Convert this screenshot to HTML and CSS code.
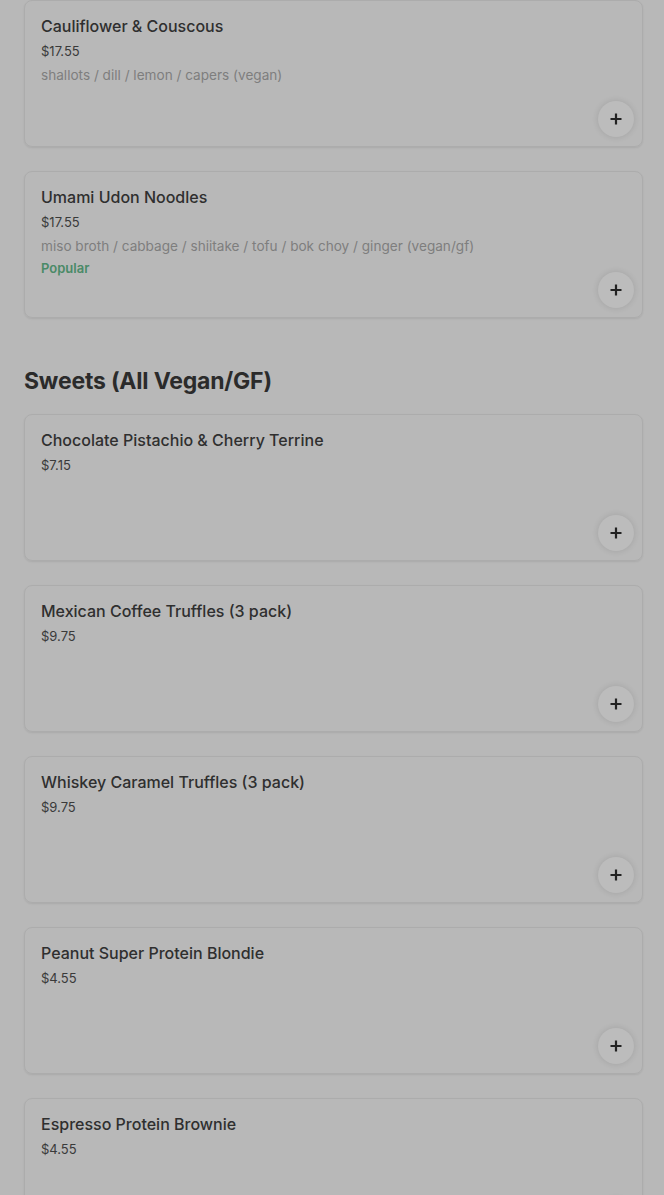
FILE: index.html
```html
<!DOCTYPE html>
<html lang="en">
<head>
<meta charset="utf-8">
<title>Menu</title>
<link rel="stylesheet" href="styles.css">
</head>
<body>
<main class="menu">
  <section class="section">
    <div class="items">
      <article class="card">
        <h3 class="name">Cauliflower &amp; Couscous</h3>
        <div class="price">$17.55</div>
        <p class="desc">shallots / dill / lemon / capers (vegan)</p>
        <button class="add" aria-label="Add"><svg viewBox="0 0 14 14" width="14" height="14"><path d="M7 1.5v11M1.5 7h11" stroke="#222" stroke-width="2.2" fill="none"/></svg></button>
      </article>
      <article class="card">
        <h3 class="name">Umami Udon Noodles</h3>
        <div class="price">$17.55</div>
        <p class="desc">miso broth / cabbage / shiitake / tofu / bok choy / ginger (vegan/gf)</p>
        <div class="tag">Popular</div>
        <button class="add" aria-label="Add"><svg viewBox="0 0 14 14" width="14" height="14"><path d="M7 1.5v11M1.5 7h11" stroke="#222" stroke-width="2.2" fill="none"/></svg></button>
      </article>
    </div>
  </section>
  <section class="section">
    <h2 class="heading">Sweets (All Vegan/GF)</h2>
    <div class="items">
      <article class="card">
        <h3 class="name">Chocolate Pistachio &amp; Cherry Terrine</h3>
        <div class="price">$7.15</div>
        <button class="add" aria-label="Add"><svg viewBox="0 0 14 14" width="14" height="14"><path d="M7 1.5v11M1.5 7h11" stroke="#222" stroke-width="2.2" fill="none"/></svg></button>
      </article>
      <article class="card">
        <h3 class="name">Mexican Coffee Truffles (3 pack)</h3>
        <div class="price">$9.75</div>
        <button class="add" aria-label="Add"><svg viewBox="0 0 14 14" width="14" height="14"><path d="M7 1.5v11M1.5 7h11" stroke="#222" stroke-width="2.2" fill="none"/></svg></button>
      </article>
      <article class="card">
        <h3 class="name">Whiskey Caramel Truffles (3 pack)</h3>
        <div class="price">$9.75</div>
        <button class="add" aria-label="Add"><svg viewBox="0 0 14 14" width="14" height="14"><path d="M7 1.5v11M1.5 7h11" stroke="#222" stroke-width="2.2" fill="none"/></svg></button>
      </article>
      <article class="card">
        <h3 class="name">Peanut Super Protein Blondie</h3>
        <div class="price">$4.55</div>
        <button class="add" aria-label="Add"><svg viewBox="0 0 14 14" width="14" height="14"><path d="M7 1.5v11M1.5 7h11" stroke="#222" stroke-width="2.2" fill="none"/></svg></button>
      </article>
      <article class="card">
        <h3 class="name">Espresso Protein Brownie</h3>
        <div class="price">$4.55</div>
        <button class="add" aria-label="Add"><svg viewBox="0 0 14 14" width="14" height="14"><path d="M7 1.5v11M1.5 7h11" stroke="#222" stroke-width="2.2" fill="none"/></svg></button>
      </article>
    </div>
  </section>
</main>
</body>
</html>
```
FILE: styles.css
```css
* { box-sizing: border-box; }
html, body {
  margin: 0;
  padding: 0;
  background: #b8b8b8;
  font-family: "Inter", "Roboto", "Liberation Sans", sans-serif;
  color: #2e2e2e;
}
.menu {
  padding: 0 21px 0 24px;
  display: flex;
  flex-direction: column;
  gap: 48px;
}
.section {
  display: flex;
  flex-direction: column;
}
.items {
  display: flex;
  flex-direction: column;
  gap: 24px;
}
.heading {
  margin: 1px 0 19px;
  font-size: 23px;
  font-weight: 700;
  letter-spacing: -0.2px;
  line-height: 28px;
  color: #2b2b2b;
}
.card {
  position: relative;
  height: 147px;
  border: 1px solid #acacac;
  border-radius: 8px;
  box-shadow: 0 1px 2px rgba(0,0,0,0.08);
  padding: 14px 16px;
}
.name {
  margin: 0;
  font-size: 16px;
  font-weight: 500;
  line-height: 22px;
  color: #2f2f2f;
}
.price {
  margin-top: 4px;
  font-size: 13px;
  line-height: 20px;
  color: #3a3a3a;
}
.desc {
  margin: 4px 0 0;
  font-size: 13.6px;
  line-height: 20px;
  color: #7e7e7e;
}
.tag {
  margin-top: 2px;
  font-size: 13px;
  font-weight: 600;
  line-height: 20px;
  color: #4a8a67;
}
.add {
  position: absolute;
  right: 8px;
  bottom: 9px;
  width: 36px;
  height: 36px;
  border-radius: 50%;
  border: none;
  background: #bcbcbc;
  box-shadow: 0 0 6px rgba(0,0,0,0.12);
  display: flex;
  align-items: center;
  justify-content: center;
  padding: 0;
}
.add svg { display: block; }
```
